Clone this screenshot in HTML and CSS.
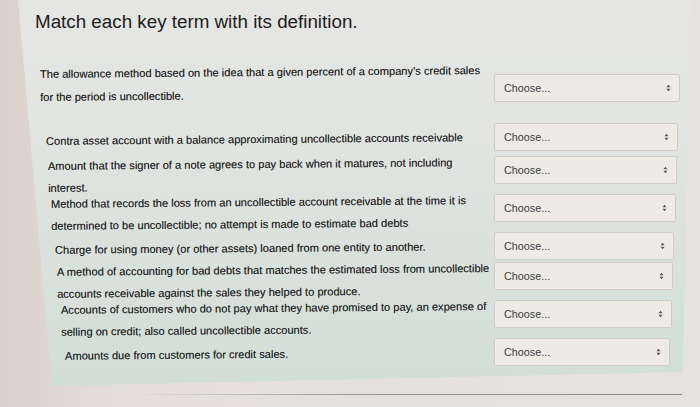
FILE: index.html
```html
<!DOCTYPE html>
<html lang="en">
<head>
<meta charset="utf-8">
<title>Match each key term</title>
<link rel="stylesheet" href="styles.css">
</head>
<body>
<div class="screen">
  <div class="panel">
    <h1 class="title">Match each key term with its definition.</h1>
    <div class="rows">
      <div class="row row-first">
        <p class="term">The allowance method based on the idea that a given percent of a company’s credit sales<br>for the period is uncollectible.</p>
        <div class="choose"><span>Choose...</span><svg class="updown" viewBox="0 0 6 9" width="6" height="9"><path d="M0.6 3.6 L3 0.6 L5.4 3.6Z M0.6 5.4 L3 8.4 L5.4 5.4Z"/></svg></div>
      </div>
      <div class="row row-single row-gap">
        <p class="term">Contra asset account with a balance approximating uncollectible accounts receivable</p>
        <div class="choose"><span>Choose...</span><svg class="updown" viewBox="0 0 6 9" width="6" height="9"><path d="M0.6 3.6 L3 0.6 L5.4 3.6Z M0.6 5.4 L3 8.4 L5.4 5.4Z"/></svg></div>
      </div>
      <div class="row">
        <p class="term">Amount that the signer of a note agrees to pay back when it matures, not including<br>interest.</p>
        <div class="choose"><span>Choose...</span><svg class="updown" viewBox="0 0 6 9" width="6" height="9"><path d="M0.6 3.6 L3 0.6 L5.4 3.6Z M0.6 5.4 L3 8.4 L5.4 5.4Z"/></svg></div>
      </div>
      <div class="row">
        <p class="term">Method that records the loss from an uncollectible account receivable at the time it is<br>determined to be uncollectible; no attempt is made to estimate bad debts</p>
        <div class="choose"><span>Choose...</span><svg class="updown" viewBox="0 0 6 9" width="6" height="9"><path d="M0.6 3.6 L3 0.6 L5.4 3.6Z M0.6 5.4 L3 8.4 L5.4 5.4Z"/></svg></div>
      </div>
      <div class="row row-single">
        <p class="term">Charge for using money (or other assets) loaned from one entity to another.</p>
        <div class="choose"><span>Choose...</span><svg class="updown" viewBox="0 0 6 9" width="6" height="9"><path d="M0.6 3.6 L3 0.6 L5.4 3.6Z M0.6 5.4 L3 8.4 L5.4 5.4Z"/></svg></div>
      </div>
      <div class="row">
        <p class="term">A method of accounting for bad debts that matches the estimated loss from uncollectible<br>accounts receivable against the sales they helped to produce.</p>
        <div class="choose"><span>Choose...</span><svg class="updown" viewBox="0 0 6 9" width="6" height="9"><path d="M0.6 3.6 L3 0.6 L5.4 3.6Z M0.6 5.4 L3 8.4 L5.4 5.4Z"/></svg></div>
      </div>
      <div class="row">
        <p class="term">Accounts of customers who do not pay what they have promised to pay, an expense of<br>selling on credit; also called uncollectible accounts.</p>
        <div class="choose"><span>Choose...</span><svg class="updown" viewBox="0 0 6 9" width="6" height="9"><path d="M0.6 3.6 L3 0.6 L5.4 3.6Z M0.6 5.4 L3 8.4 L5.4 5.4Z"/></svg></div>
      </div>
      <div class="row row-single">
        <p class="term">Amounts due from customers for credit sales.</p>
        <div class="choose"><span>Choose...</span><svg class="updown" viewBox="0 0 6 9" width="6" height="9"><path d="M0.6 3.6 L3 0.6 L5.4 3.6Z M0.6 5.4 L3 8.4 L5.4 5.4Z"/></svg></div>
      </div>
    </div>
  </div>
  <div class="edge-line"></div>
</div>
</body>
</html>
```
FILE: styles.css
```css
html, body {
  margin: 0;
  padding: 0;
}
body {
  width: 700px;
  height: 407px;
  overflow: hidden;
  font-family: "Liberation Sans", Arial, sans-serif;
  background: linear-gradient(to right, #dacfcb 0, #ddd4d0 30px, #e4dfda 120px, #e6e3df 100%);
}
.screen {
  width: 700px;
  height: 407px;
}
.panel {
  box-sizing: border-box;
  margin-left: 18px;
  width: 672px;
  height: 386px;
  padding: 11px 10px 0 0;
  background: linear-gradient(to bottom, #e5e6e4 0, #e1e4e1 35%, #d9e1dc 70%, #d1ded7 100%);
  clip-path: polygon(0 0, 100% 0, 665px 372px, 34px 386px);
}
.title {
  margin: 0 0 0 17px;
  font-size: 18.8px;
  line-height: 22px;
  font-weight: normal;
  color: #202020;
}
.rows {
  display: flex;
  flex-direction: column;
  padding-top: 28px;
}
.row {
  --shift: 0px;
  display: grid;
  grid-template-columns: minmax(0, 1fr) 186px;
  align-items: start;
  padding-left: 22px;
}
.row:nth-child(2) { --shift: 6px; }
.row:nth-child(3) { --shift: 8px; }
.row:nth-child(4) { --shift: 11px; }
.row:nth-child(5) { --shift: 15px; }
.row:nth-child(6) { --shift: 17px; }
.row:nth-child(7) { --shift: 21px; }
.row:nth-child(8) { --shift: 25px; }
.term {
  margin: -3px 0;
  padding-left: var(--shift);
  font-size: 11.1px;
  line-height: 22px;
  color: #1e1e1e;
  text-shadow: 0 0 0.4px rgba(0, 0, 0, 0.45);
  white-space: nowrap;
  transform: rotate(-0.5deg);
}
.row-single {
  padding-bottom: 2px;
}
.row-single .term {
  margin: 5px 0 0;
}
.row-gap {
  margin-bottom: 3px;
}
.choose {
  box-sizing: border-box;
  height: 28px;
  margin-right: calc(var(--shift) * 0.4);
  display: flex;
  align-items: center;
  justify-content: space-between;
  padding: 0 8px 0 9px;
  background: #eeeae6;
  border: 1px solid #d2ccc7;
  border-radius: 2px;
  font-size: 10.8px;
  color: #404040;
}
.updown {
  fill: #555555;
  width: 5px;
  height: 8px;
}
.row-first {
  margin-bottom: 16px;
}
.row-first .term {
  margin: 0;
  line-height: 23px;
}
.row-first .choose {
  margin-top: 13px;
}
.edge-line {
  height: 1px;
  margin: 8px 18px 0 130px;
  background: linear-gradient(to right, rgba(140, 138, 134, 0), #9a9894 40%, #8e8c88);
}
```
